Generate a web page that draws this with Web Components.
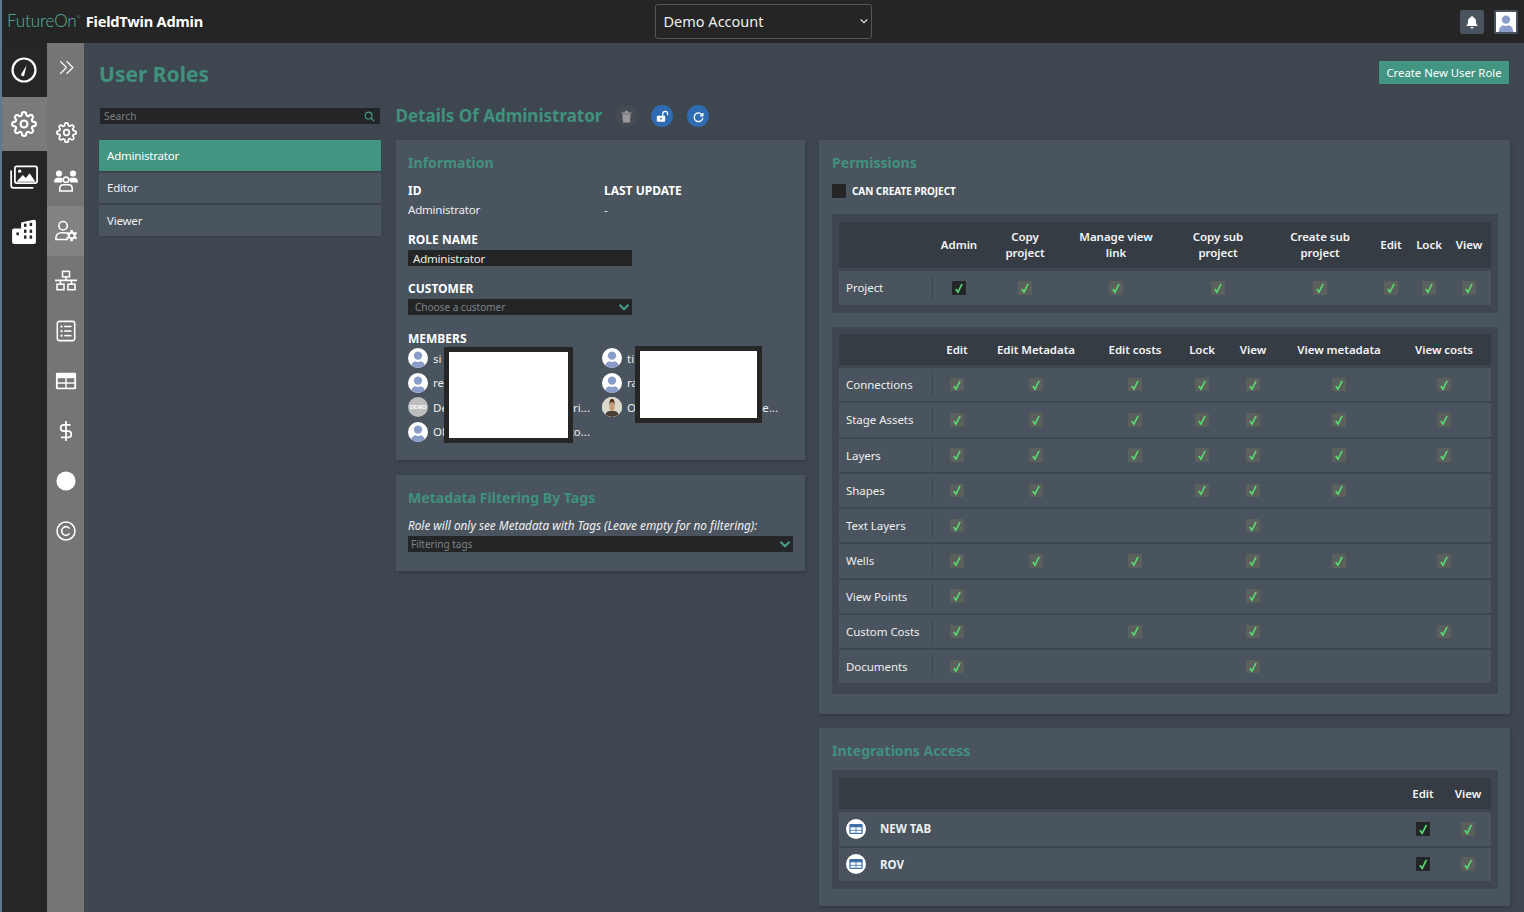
<!DOCTYPE html>
<html lang="en"><head><meta charset="utf-8"><title>User Roles</title>
<style>
html,body{margin:0;height:100%;overflow:hidden}
body{font-family:"Noto Sans","Open Sans",sans-serif;font-size:11.5px;color:#f2f2f2;background:#3e4750}
</style></head><body>
<x-app></x-app>
<script>
const ICONS={
gauge:'<circle cx="12" cy="12" r="10.6" fill="none" stroke="#fff" stroke-width="2"/><path d="M14.6 6.2 12.7 14.6a1.5 1.5 0 1 1-2.6-1z" fill="#fff" transform="translate(-.3 1.6)"/>',
gear:'<g fill="none" stroke="#fff" stroke-width="2" stroke-linecap="round" stroke-linejoin="round"><circle cx="12" cy="12" r="3.2"/><path d="M19.4 15a1.65 1.65 0 0 0 .33 1.82l.06.06a2 2 0 0 1 0 2.83 2 2 0 0 1-2.83 0l-.06-.06a1.65 1.65 0 0 0-1.82-.33 1.65 1.65 0 0 0-1 1.51V21a2 2 0 0 1-2 2 2 2 0 0 1-2-2v-.09A1.65 1.65 0 0 0 9 19.4a1.65 1.65 0 0 0-1.82.33l-.06.06a2 2 0 0 1-2.83 0 2 2 0 0 1 0-2.83l.06-.06a1.65 1.65 0 0 0 .33-1.82 1.65 1.65 0 0 0-1.51-1H3a2 2 0 0 1-2-2 2 2 0 0 1 2-2h.09A1.65 1.65 0 0 0 4.6 9a1.65 1.65 0 0 0-.33-1.82l-.06-.06a2 2 0 0 1 0-2.83 2 2 0 0 1 2.83 0l.06.06a1.65 1.65 0 0 0 1.82.33H9a1.65 1.65 0 0 0 1-1.51V3a2 2 0 0 1 2-2 2 2 0 0 1 2 2v.09a1.65 1.65 0 0 0 1 1.51 1.65 1.65 0 0 0 1.82-.33l.06-.06a2 2 0 0 1 2.83 0 2 2 0 0 1 0 2.83l-.06.06a1.65 1.65 0 0 0-.33 1.82V9a1.65 1.65 0 0 0 1.51 1H21a2 2 0 0 1 2 2 2 2 0 0 1-2 2h-.09a1.65 1.65 0 0 0-1.51 1z"/></g>',
images:'<g fill="none" stroke="#fff" stroke-width="1.5" stroke-linejoin="round" stroke-linecap="round"><rect x="4.2" y="2" width="19" height="14.4" rx="1.6"/><path d="M1 6v12.4a2 2 0 0 0 2 2h16.5"/></g><path d="M5.6 15.2 11 9.5l2.6 2.6 3.2-4.1 5 7.2z" fill="#fff"/><circle cx="8.3" cy="6.2" r="1.4" fill="#fff"/>',
building:'<path d="M9.3 3.3 21 .8Q23 .5 23 2.5V21.3Q23 23 21.3 23H2.8Q1 23 1 21.3V10.5Q1 8.8 2.8 8.8H9.3z" fill="#fff"/><g fill="#262626"><rect x="12" y="4.3" width="2.3" height="3"/><rect x="17.2" y="3.5" width="2.3" height="3"/><rect x="12" y="9.8" width="2.3" height="3"/><rect x="17.2" y="9.8" width="2.3" height="3"/><rect x="12" y="15.2" width="2.3" height="3"/><rect x="17.2" y="15.2" width="2.3" height="3"/><rect x="5" y="12.4" width="2.3" height="2.6"/></g>',
users:'<g fill="#fff"><circle cx="5" cy="4.5" r="3.1"/><circle cx="19" cy="4.5" r="3.1"/><path d="M0 13.5Q0 8.8 3.5 8.8H6.5Q8.2 8.8 9 10 8 11.5 8 13.5zM24 13.5Q24 8.8 20.5 8.8H17.5Q15.8 8.8 15 10 16 11.5 16 13.5z"/></g><g fill="none" stroke="#fff" stroke-width="1.6"><circle cx="12" cy="10.8" r="2.7"/><path d="M5.8 22V19.4Q5.8 15.8 9.5 15.8H14.5Q18.2 15.8 18.2 19.4V22Z"/></g>',
usercog:'<g fill="none" stroke="#fff" stroke-width="1.7"><circle cx="8.8" cy="6.3" r="4.6"/><path d="M13 14.6Q11.6 14 10.4 14H7.2Q1 14 1 20.5V21.3H14"/></g><circle cx="18.2" cy="17" r="3.2" fill="none" stroke="#fff" stroke-width="2.2"/><path d="M18.2 10.8v2.4M18.2 20.8v2.4M12.8 13.9l2.1 1.2M21.5 18.9l2.1 1.2M12.8 20.1l2.1-1.2M21.5 15.1l2.1-1.2" stroke="#fff" stroke-width="2.6"/>',
network:'<g fill="none" stroke="#fff" stroke-width="1.7"><rect x="8.2" y="1.5" width="7.6" height="6"/><rect x="2.2" y="15.5" width="7.6" height="6"/><rect x="14.2" y="15.5" width="7.6" height="6"/><path d="M12 7.5V11.3M0 11.3H24M6 11.3V15.5M18 11.3V15.5"/></g>',
list:'<rect x="2.5" y="1.5" width="19" height="21" rx="2.2" fill="none" stroke="#fff" stroke-width="1.7"/><g fill="#fff"><rect x="6" y="6" width="2.2" height="2.2"/><rect x="6" y="11" width="2.2" height="2.2"/><rect x="6" y="16" width="2.2" height="2.2"/><rect x="10" y="6.2" width="8" height="1.7"/><rect x="10" y="11.2" width="8" height="1.7"/><rect x="10" y="16.2" width="8" height="1.7"/></g>',
table:'<rect x="1" y="3" width="22" height="18" rx="1.5" fill="#fff"/><g fill="#757575"><rect x="3" y="9" width="8.2" height="4.4"/><rect x="12.8" y="9" width="8.2" height="4.4"/><rect x="3" y="15" width="8.2" height="4.2"/><rect x="12.8" y="15" width="8.2" height="4.2"/></g>',
dollar:'<path d="M12 1v22M17 5.3H9.6a3.4 3.4 0 0 0 0 6.8h4.8a3.4 3.4 0 0 1 0 6.8H6.5" fill="none" stroke="#fff" stroke-width="1.9"/>',
dot:'<circle cx="12" cy="12" r="11.5" fill="#fff"/>',
copyright:'<circle cx="12" cy="12" r="10.8" fill="none" stroke="#fff" stroke-width="1.8"/><path d="M16.3 9.1a5.2 5.2 0 1 0 0 5.8" fill="none" stroke="#fff" stroke-width="1.9"/>',
chevrons:'<g fill="none" stroke="#fff" stroke-width="1.6" stroke-linecap="round" stroke-linejoin="round"><path d="M12.5 3.5 21 12l-8.5 8.5M3.5 3.5 12 12l-8.5 8.5"/></g>',
bell:'<path d="M12 1.5a1.7 1.7 0 0 1 1.7 1.7v.6c3.4.8 5.2 3.4 5.2 6.7 0 4.3 1 5.9 2.6 7.3v1H2.5v-1c1.6-1.4 2.6-3 2.6-7.3 0-3.3 1.8-5.9 5.2-6.7v-.6A1.7 1.7 0 0 1 12 1.5zM9.4 20.4h5.2a2.6 2.6 0 0 1-5.2 0z" fill="#fff"/>',
lock:'<path d="M3 10.5h12.5a1.5 1.5 0 0 1 1.5 1.5v8a1.5 1.5 0 0 1-1.5 1.5H3A1.5 1.5 0 0 1 1.5 20v-8A1.5 1.5 0 0 1 3 10.5zM9.3 14.2a1.7 1.7 0 1 0 .01 0z" fill="#fff" fill-rule="evenodd"/><path d="M12.5 10.5V7a4.5 4.5 0 0 1 9 0v2.5" fill="none" stroke="#fff" stroke-width="2.3"/>',
refresh:'<path d="M20 5.5V11h-5.5" fill="none" stroke="#fff" stroke-width="2.4"/><path d="M19.5 10.5A8 8 0 1 0 20 14.5" fill="none" stroke="#fff" stroke-width="2.4"/>',
trash:'<path d="M3 4.5h6V3q0-1.5 1.5-1.5h3Q15 1.5 15 3v1.5h6v2.3H3zM4.5 8h15l-1 14q-.1 1-1.2 1H6.7q-1.1 0-1.2-1z" fill="#9a9a9a"/>',
search:'<circle cx="10" cy="10" r="7.5" fill="none" stroke="#46a08a" stroke-width="2.4"/><path d="M15.5 15.5 22 22" stroke="#46a08a" stroke-width="2.6"/>',
caret:'<path d="M3 7.5 12 16.5 21 7.5" fill="none" stroke="#46a08a" stroke-width="4"/>',
caretw:'<path d="M4 8.5 12 16 20 8.5" fill="none" stroke="#ddd" stroke-width="3"/>',
tableblue:'<rect x="4" y="6" width="16" height="12" rx="1.5" fill="#3e6fa8"/><g fill="#fff"><rect x="5.5" y="10" width="6" height="3"/><rect x="12.5" y="10" width="6" height="3"/><rect x="5.5" y="14" width="6" height="2.6"/><rect x="12.5" y="14" width="6" height="2.6"/></g>'
};
function def(name,css,html,init){
  customElements.define(name,class extends HTMLElement{
    connectedCallback(){
      if(this.shadowRoot)return;
      const r=this.attachShadow({mode:'open'});
      r.innerHTML='<style>'+css+'</style>'+(typeof html==='function'?html(this):html);
      if(init)init(this,r);
    }
  });
}
def('x-icon',':host{display:inline-flex;width:var(--s,20px);height:var(--s,20px);flex:none}svg{width:100%;height:100%;display:block}',
  h=>'<svg viewBox="0 0 24 24" aria-hidden="true">'+(ICONS[h.getAttribute('name')]||'')+'</svg>');
def('x-check',':host{display:inline-flex;align-items:center;justify-content:center;width:var(--c,13.5px);height:var(--c,13.5px);border-radius:1px;background:#5b605c}:host([on]),:host([empty]){background:#232526}:host([empty]) svg{display:none}svg{width:88%;height:88%}',
  '<svg viewBox="0 0 12 12"><path d="M2.8 7 5 10.2 9.2 1.8" fill="none" stroke="#56dc70" stroke-width="1.6"/></svg>');
def('x-avatar',`:host{display:inline-flex;width:20px;height:20px;border-radius:50%;overflow:hidden;background:#fff;flex:none;align-items:center;justify-content:center}
 :host([square]){border-radius:0}
 :host([kind=demo]){background:#bdbdbd;color:#fff;font:700 5.5px "Liberation Sans",sans-serif}
 svg{width:100%;height:100%}`,
 h=>{const k=h.getAttribute('kind');
  if(k==='demo')return 'DEMO';
  if(k==='photo')return '<svg viewBox="0 0 20 20"><rect width="20" height="20" fill="#dbd9c9"/><path d="M3 20q0-5 4-6h6q4 1 4 6z" fill="#4b3f35"/><ellipse cx="10" cy="9" rx="2.6" ry="5" fill="#c79a77"/><path d="M7.3 8Q7.3 1.8 10 1.8T12.7 8Q12 5 10 5T7.3 8z" fill="#4f3422"/></svg>';
  return '<svg viewBox="0 0 20 20"><circle cx="10" cy="7.6" r="4.2" fill="#8a9dca"/><path d="M2.8 20q0-5.7 4.6-6.8 2.6 1.5 5.2 0 4.6 1.1 4.6 6.8z" fill="#8a9dca"/></svg>'});
def('x-round-btn',':host{display:inline-flex;width:22px;height:22px;border-radius:50%;background:var(--bg,#2f6cb3);align-items:center;justify-content:center;--s:13px}','<slot></slot>');
def('x-logo',`:host{display:flex;align-items:baseline;gap:5px;padding-left:5px;margin-top:-2px}
 .f{font:300 17px Lato,sans-serif;color:#55b5a0;letter-spacing:-.1px}sup{font-size:5px;vertical-align:8px;line-height:0}
 .t{font:700 14.6px "Noto Sans",sans-serif;color:#fff;letter-spacing:-.2px}`,
 '<span class="f">FutureOn<sup>®</sup></span><span class="t"><slot></slot></span>');
def('x-account',`:host{display:flex;align-items:center;justify-content:space-between;box-sizing:border-box;width:217px;height:35px;border:1px solid #565656;border-radius:3px;padding:0 2px 0 8px;font-size:14.5px;color:#eee;--s:10px}`,
 '<span><slot></slot></span><x-icon name="caretw"></x-icon>');
def('x-topbar',`:host{display:grid;grid-template-columns:1fr 217px 1fr;align-items:center;height:43px;background:#252525;box-sizing:border-box;padding:0 6px 1px 6px}
 .r{display:flex;justify-content:flex-end;gap:10px;margin-top:1px}
 x-logo{margin-left:-6px}
 .b{display:flex;width:24px;height:24px;background:#49535d;border-radius:2px;align-items:center;justify-content:center;--s:14px}`,
 `<x-logo>FieldTwin Admin</x-logo><x-account>Demo Account</x-account>
 <div class="r"><span class="b"><x-icon name="bell"></x-icon></span><span class="b"><x-avatar square></x-avatar></span></div>`);
def('x-rail',`:host{display:flex;flex-direction:column;width:45px;background:#262626;--s:26px}
 div{height:54px;display:flex;align-items:center;justify-content:center;padding-right:1px}
 .a{background:#7a7a7a}.i{--s:28px}`,
 `<div><x-icon name="gauge"></x-icon></div><div class="a"><x-icon name="gear"></x-icon></div><div class="i"><x-icon name="images"></x-icon></div><div><x-icon name="building"></x-icon></div>`);
def('x-subrail',`:host{display:flex;flex-direction:column;width:37px;background:#757575;--s:22px}
 .c{height:48px;margin-bottom:15px;display:flex;align-items:center;justify-content:center;--s:17px;padding-left:1px}
 div.n{height:50px;box-sizing:border-box;display:flex;align-items:center;justify-content:center;padding-left:1px}
 div.g{padding-top:2px;--s:21px}
 .a{background:#828282}`,
 `<div class="c"><x-icon name="chevrons"></x-icon></div>
 <div class="n g"><x-icon name="gear"></x-icon></div><div class="n"><x-icon name="users" style="--s:24px"></x-icon></div><div class="n a"><x-icon name="usercog"></x-icon></div><div class="n"><x-icon name="network"></x-icon></div><div class="n"><x-icon name="list"></x-icon></div><div class="n"><x-icon name="table"></x-icon></div><div class="n"><x-icon name="dollar"></x-icon></div><div class="n" style="--s:20px"><x-icon name="dot"></x-icon></div><div class="n" style="--s:20px"><x-icon name="copyright"></x-icon></div>`);
def('x-search',`:host{display:flex;align-items:center;justify-content:space-between;height:16px;background:#232526;margin:0 1px;padding:0 5px 0 4px;font-size:10.3px;color:#7b7f82;--s:11px}`,
 '<span>Search</span><x-icon name="search"></x-icon>');
def('x-role',`:host{display:flex;align-items:center;height:30.5px;padding-left:8px;box-sizing:border-box;background:#4a545e;font-size:11.5px;letter-spacing:-.2px;color:#f0f0f0;box-shadow:0 1px 1px rgba(0,0,0,.1)}
 :host([active]){background:#429581;color:#fff}`,'<slot></slot>');
def('x-card',`:host{display:block;background:#4a545e;padding:14px 12px 0 var(--pl,13px);box-sizing:border-box;box-shadow:1px 2px 4px rgba(0,0,0,.2);height:var(--h)}
 h2{margin:0 0 10px;font:700 14.1px/18px "Noto Sans",sans-serif;color:#40917d}`,
 h=>'<h2>'+h.getAttribute('heading')+'</h2><slot></slot>');
def('x-field',`:host{display:block;margin-bottom:var(--mb,14px)}
 .l{font:700 12px/15px "Noto Sans",sans-serif;padding-top:1px;color:#fff}`,
 h=>'<div class="l">'+h.getAttribute('label')+'</div><slot></slot>');
def('x-input',`:host{display:flex;align-items:center;box-sizing:border-box;height:16px;background:#232526;padding:0 5px;font-size:11.5px;letter-spacing:-.2px;color:#eee;width:var(--w,224px);margin-top:3px}`,'<slot></slot>');
def('x-select',`:host{display:flex;align-items:center;justify-content:space-between;box-sizing:border-box;height:16px;background:#232526;padding:0 2px 0 var(--sl,7px);font-size:10px;color:#7f8386;width:var(--w,224px);margin-top:3px;--s:12px}`,
 '<span><slot></slot></span><x-icon name="caret"></x-icon>');
def('x-member',`:host{display:flex;align-items:center;height:24.5px;gap:5px;font-size:11.5px;color:#eee}
 span{flex:1;display:flex;justify-content:space-between;min-width:0}i{font-style:normal}`,
 h=>'<x-avatar'+(h.hasAttribute('kind')?' kind="'+h.getAttribute('kind')+'"':'')+'></x-avatar><span><i>'+h.getAttribute('a')+'</i><i>'+(h.getAttribute('b')||'')+'</i></span>');
def('x-redact',`:host{position:absolute;box-sizing:border-box;background:#fff;border:5px solid #262626}`,'');
def('x-members',`:host{display:grid;grid-template-columns:182px 176px;column-gap:12px;position:relative;grid-auto-flow:column;grid-template-rows:repeat(4,24.5px)}`,'<slot></slot>');
def('x-perm-table',`:host{display:block;background:#3e4750;padding:var(--p,8px 7px)}
 .r{display:grid;grid-template-columns:var(--cols);align-items:center;text-align:center;background:#4a545e;height:var(--rh,33.25px);margin-top:2px;font-size:11.5px;letter-spacing:-.05px;color:#eee}
 .h{background:#353c44;height:var(--hh,31px);margin:0 0 3px;font-weight:600;color:#f5f5f5;line-height:16px}
 .n{text-align:left;padding-left:7px;height:70%;display:flex;align-items:center;border-right:1px solid #3e4750}
 .h .n{border:0}
 .x{display:flex;align-items:center;gap:14px;font-weight:700;border:0;padding-left:7px;--s:20px}
 .x b{display:inline-flex;width:20px;height:20px;background:#fff;border-radius:50%;overflow:hidden}
 .c{display:flex;justify-content:center}`,
 h=>{
  const cols=h.getAttribute('cols').split('|'),rows=JSON.parse(h.getAttribute('rows')),
    dark=(h.getAttribute('dark')||'').split(',').filter(Boolean).map(Number),integ=h.hasAttribute('integ');
  let s='<div class="r h"><div class="n"></div>'+cols.map(c=>'<div>'+c+'</div>').join('')+'</div>';
  for(const [name,on] of rows){
    s+='<div class="r"><div class="n'+(integ?' x':'')+'">'+(integ?'<b><x-icon name="tableblue"></x-icon></b>':'')+name+'</div>';
    cols.forEach((c,i)=>{s+='<div class="c">'+(on.includes(i)?'<x-check'+(dark.includes(i)?' on':'')+'></x-check>':'')+'</div>'});
    s+='</div>';
  }
  return s;
 });
def('x-page',`:host{flex:1;display:block;padding:0 15px;min-width:0;box-sizing:border-box;overflow:hidden}
 header{display:flex;justify-content:space-between;align-items:center;height:57px;padding-top:5px;box-sizing:border-box}
 h1{margin:0;font:700 21px/30px "Noto Sans",sans-serif;color:#40917d}
 .btn{display:flex;align-items:center;justify-content:center;width:130px;height:23px;background:#429581;color:#fff;font-size:11.3px;margin-top:-3px}
 .g{display:grid;grid-template-columns:282px 409px 691px;column-gap:14.5px;grid-template-rows:32px auto;row-gap:8px}
 .s{display:flex;flex-direction:column;justify-content:center}
 .d{display:flex;align-items:center;grid-column:2/4}
 .d h2{margin:0 13px 0 0;font:700 17px/24px "Noto Sans",sans-serif;color:#40917d}
 .d x-round-btn{margin-right:14px}.d x-round-btn.t{--bg:#444b52}
 .col{display:flex;flex-direction:column}
 .list{gap:2px}.mid{gap:15px;--pl:12.5px}.right{gap:14px}
 .two{display:grid;grid-template-columns:196px 1fr;margin-bottom:12px}
 .lab{font:700 12px/15px "Noto Sans",sans-serif;padding-top:1px;color:#fff}
 .val{font-size:11.5px;letter-spacing:-.2px;line-height:18px;margin-top:3px;color:#eee}
 .it{font-style:italic;font-size:11.75px;color:#f2f2f2;margin:0 0 2px;line-height:17px}
 .cc{display:flex;align-items:center;gap:6px;font:700 10px/14px "Noto Sans",sans-serif;letter-spacing:-.05px;color:#fff;padding-top:2px;margin:0 0 16px}
 .cc x-check{--c:14px}`,
 `<header><h1>User Roles</h1><div class="btn">Create New User Role</div></header>
 <div class="g">
  <div class="s"><x-search></x-search></div>
  <div class="d"><h2>Details Of Administrator</h2><x-round-btn class="t"><x-icon name="trash"></x-icon></x-round-btn><x-round-btn><x-icon name="lock"></x-icon></x-round-btn><x-round-btn><x-icon name="refresh"></x-icon></x-round-btn></div>
  <div class="col list"><x-role active>Administrator</x-role><x-role>Editor</x-role><x-role>Viewer</x-role></div>
  <div class="col mid">
   <x-card heading="Information" style="--h:320px">
    <div class="two"><div><div class="lab">ID</div><div class="val">Administrator</div></div><div><div class="lab">LAST UPDATE</div><div class="val">-</div></div></div>
    <x-field label="ROLE NAME"><x-input>Administrator</x-input></x-field>
    <x-field label="CUSTOMER" style="--mb:15px"><x-select>Choose a customer</x-select></x-field>
    <x-field label="MEMBERS" style="--mb:0">
     <x-members>
      <x-member a="si"></x-member><x-member a="re"></x-member><x-member a="De" b="ri..." kind="demo"></x-member><x-member a="Ol" b="to..."></x-member>
      <x-member a="ti"></x-member><x-member a="ra"></x-member><x-member a="O" b="ne..." kind="photo"></x-member>
      <x-redact style="left:36px;top:1px;width:129px;height:96px"></x-redact>
      <x-redact style="left:227px;top:0;width:127px;height:77px"></x-redact>
     </x-members>
    </x-field>
   </x-card>
   <x-card heading="Metadata Filtering By Tags" style="--h:96px">
    <div class="it">Role will only see Metadata with Tags (Leave empty for no filtering):</div>
    <x-select style="--w:385px;--sl:3px;margin-top:0">Filtering tags</x-select>
   </x-card>
  </div>
  <div class="col right">
   <x-card heading="Permissions" style="--h:574px">
    <div class="cc"><x-check empty></x-check><span>CAN CREATE PROJECT</span></div>
    <x-perm-table style="--cols:94px 52px 80px 102px 102px 102px 40px 36px 44px;--hh:46px;--rh:34px" cols="Admin|Copy<br>project|Manage view<br>link|Copy sub<br>project|Create sub<br>project|Edit|Lock|View" dark="0" rows='[["Project",[0,1,2,3,4,5,6,7]]]'></x-perm-table>
    <x-perm-table style="--cols:94px 48px 110px 88px 46px 56px 116px 94px;margin-top:14px;--p:7px 7px 11px" cols="Edit|Edit Metadata|Edit costs|Lock|View|View metadata|View costs"
     rows='[["Connections",[0,1,2,3,4,5,6]],["Stage Assets",[0,1,2,3,4,5,6]],["Layers",[0,1,2,3,4,5,6]],["Shapes",[0,1,3,4,5]],["Text Layers",[0,4]],["Wells",[0,1,2,4,5,6]],["View Points",[0,4]],["Custom Costs",[0,2,4,6]],["Documents",[0,4]]]'></x-perm-table>
   </x-card>
   <x-card heading="Integrations Access" style="--h:178px">
    <x-perm-table integ style="--cols:562px 44px 46px;--rh:33.5px;--p:8px 7px;--c:14px" cols="Edit|View" dark="0" rows='[["NEW TAB",[0,1]],["ROV",[0,1]]]'></x-perm-table>
   </x-card>
  </div>
 </div>`);
def('x-app',`:host{display:flex;flex-direction:column;height:912px;border-left:2px solid #5f7890;box-sizing:border-box;overflow:hidden}
 .m{display:flex;flex:1;min-height:0}`,
 '<x-topbar></x-topbar><div class="m"><x-rail></x-rail><x-subrail></x-subrail><x-page></x-page></div>');
</script>
</body></html>
